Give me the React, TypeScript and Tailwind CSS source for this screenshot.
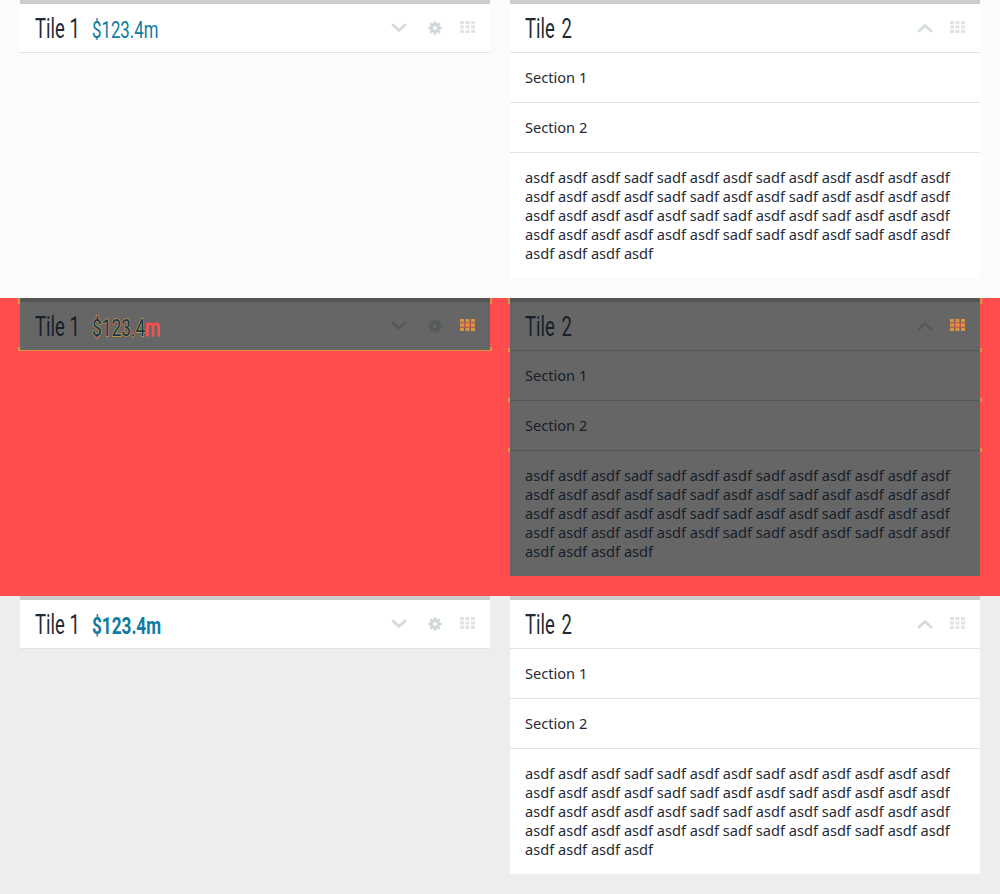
import React from "react";

const lorem = "asdf asdf asdf sadf sadf asdf asdf sadf asdf asdf asdf asdf asdf asdf asdf asdf asdf sadf sadf asdf asdf sadf asdf asdf asdf asdf asdf asdf asdf asdf asdf sadf sadf asdf asdf sadf asdf asdf asdf asdf asdf asdf asdf asdf asdf sadf sadf asdf asdf sadf asdf asdf asdf asdf asdf asdf";

type V = "light" | "debug" | "gray";

function Chevron({ up, color }: { up?: boolean; color: string }) {
  return (
    <svg width="16" height="10" viewBox="0 0 16 10" fill="none" stroke={color} strokeWidth="3" strokeLinecap="round" strokeLinejoin="round">
      <path d={up ? "M2 8L8 2.5L14 8" : "M2 2L8 7.5L14 2"} />
    </svg>
  );
}

function Gear({ color }: { color: string }) {
  return (
    <svg width="14" height="14" viewBox="0 0 14 14">
      <circle cx="7" cy="7" r="3.5" fill="none" stroke={color} strokeWidth="2.8" />
      {[0, 45, 90, 135, 180, 225, 270, 315].map((a) => (
        <rect key={a} x="5.7" y="0.3" width="2.6" height="3" fill={color} transform={`rotate(${a} 7 7)`} />
      ))}
    </svg>
  );
}

function Grid({ color, debug }: { color: string; debug?: boolean }) {
  const cells = [0, 1, 2, 3, 4, 5, 6, 7, 8];
  return (
    <svg width="15" height="12" viewBox="0 0 15 12">
      {debug && (
        <>
          <rect x="6" y="0" width="3" height="12" fill="#e0584f" opacity="0.7" />
          <rect x="0" y="3.5" width="15" height="5" fill="#e0584f" opacity="0.7" />
        </>
      )}
      {cells.map((i) => (
        <rect key={i} x={(i % 3) * 5.5} y={Math.floor(i / 3) * 4.4} width="4" height="3.2" fill={color} />
      ))}
    </svg>
  );
}

function Mark({ className }: { className: string }) {
  return <span className={"absolute w-[2px] bg-[#d9953f] " + className} />;
}

function Title({ text, wide }: { text: string; wide?: boolean }) {
  return (
    <span className={"inline-block whitespace-nowrap " + (wide ? "w-[47px]" : "w-[42px]")}>
      <span className={"inline-block origin-left scale-x-[0.66] font-['Roboto',sans-serif] text-[28px] leading-[48px] " + (wide ? "[word-spacing:3px]" : "")}>{text}</span>
    </span>
  );
}

function Header({ title, amount, up, v }: { title: string; amount?: string; up?: boolean; v: V }) {
  const debug = v === "debug";
  const iconColor = debug ? "#555b5c" : "#d5dcdf";
  const gear = debug ? "#555b5c" : "#d0d7da";
  return (
    <div className={"flex h-[48px] items-center justify-between pl-[15px] pr-[15px] " + (debug ? "text-[#16202a]" : "text-[#1f2a36]")}>
      <div className="flex items-baseline pt-[2px]">
        <Title text={title} wide={up} />
        {amount && (
          <span className="ml-[15px] inline-block w-[68px] whitespace-nowrap">
            {v === "debug" ? (
              <span className="inline-block origin-left scale-x-[0.72] font-['Roboto',sans-serif] text-[24px] text-[#0d3a50] [-webkit-text-stroke:1.4px_#d9953f] [paint-order:stroke_fill]">
                $123.4<span className="text-[#ff4d4d] [-webkit-text-stroke:1px_#ff4d4d]">m</span>
              </span>
            ) : v === "gray" ? (
              <span className="inline-block origin-left scale-x-[0.715] font-['Roboto',sans-serif] text-[24px] font-bold text-[#0f7ba3]">{amount}</span>
            ) : (
              <span className="inline-block origin-left scale-x-[0.70] font-['Roboto',sans-serif] text-[24px] text-[#0f7ba3]">{amount}</span>
            )}
          </span>
        )}
      </div>
      <div className="flex items-center">
        <Chevron up={up} color={iconColor} />
        {!up && <span className="ml-[21px] flex"><Gear color={gear} /></span>}
        <span className={"flex -translate-y-[1px] " + (up ? "ml-[17px]" : "ml-[18px]")}>
          <Grid color={debug ? "#d9953f" : "#e1e4e6"} debug={debug} />
        </span>
      </div>
    </div>
  );
}

function Panel({ v, children, marks }: { v: V; children: React.ReactNode; marks?: React.ReactNode }) {
  const debug = v === "debug";
  return (
    <div className={"relative self-start border-t-4 " + (debug ? "border-[#555555] bg-[#666666]" : v === "gray" ? "border-[#cccccc] bg-white" : "border-[#cbcdd1] bg-white")}>
      {children}
      {marks}
    </div>
  );
}

function Row({ v }: { v: V }) {
  const debug = v === "debug";
  const line = debug ? "border-[#555555]" : "border-[#e3e3e3]";
  const bg = debug ? "bg-[#ff4d4d]" : v === "gray" ? "bg-[#ededed]" : "bg-[#fbfbfb]";
  const ink = debug ? "text-[#16202a]" : "text-[#1f2a36]";
  const sec = "flex h-[50px] items-center border-t px-[15px] text-[14.6px] " + line + " " + ink;
  return (
    <div className={"grid h-[298px] grid-cols-2 gap-x-5 px-5 font-['Noto_Sans',sans-serif] " + bg}>
      <Panel
        v={v}
        marks={
          debug && (
            <>
              <Mark className="-left-[2px] -top-[4px] h-[6px]" />
              <Mark className="-right-[2px] -top-[4px] h-[6px]" />
              <Mark className="-left-[2px] top-[45px] h-[4px]" />
              <Mark className="-right-[2px] top-[45px] h-[4px]" />
              <span className="absolute -left-[2px] -right-[2px] top-[48px] h-[1px] bg-[#d9953f]" />
            </>
          )
        }
      >
        <Header title="Tile 1" amount="$123.4m" v={v} />
        <div className={"border-t " + (debug ? "border-[#d9953f]" : line)} />
      </Panel>
      <Panel
        v={v}
        marks={
          debug && (
            <>
              <Mark className="-left-[2px] -top-[4px] h-[6px]" />
              <Mark className="-right-[2px] -top-[4px] h-[6px]" />
              <Mark className="-left-[2px] top-[46px] h-[4px]" />
              <Mark className="-right-[2px] top-[46px] h-[4px]" />
              <Mark className="-left-[2px] top-[96px] h-[4px]" />
              <Mark className="-right-[2px] top-[96px] h-[4px]" />
              <Mark className="-left-[2px] top-[146px] h-[4px]" />
              <Mark className="-right-[2px] top-[146px] h-[4px]" />
            </>
          )
        }
      >
        <Header title="Tile 2" up v={v} />
        <div className={sec}>Section 1</div>
        <div className={sec}>Section 2</div>
        <div className={"border-t p-[15px] text-[14.6px] leading-[19px] " + line + " " + ink}>{lorem}</div>
      </Panel>
    </div>
  );
}

export default function App() {
  return (
    <div className="h-[894px] w-[1000px] overflow-hidden">
      <Row v="light" />
      <Row v="debug" />
      <Row v="gray" />
    </div>
  );
}
